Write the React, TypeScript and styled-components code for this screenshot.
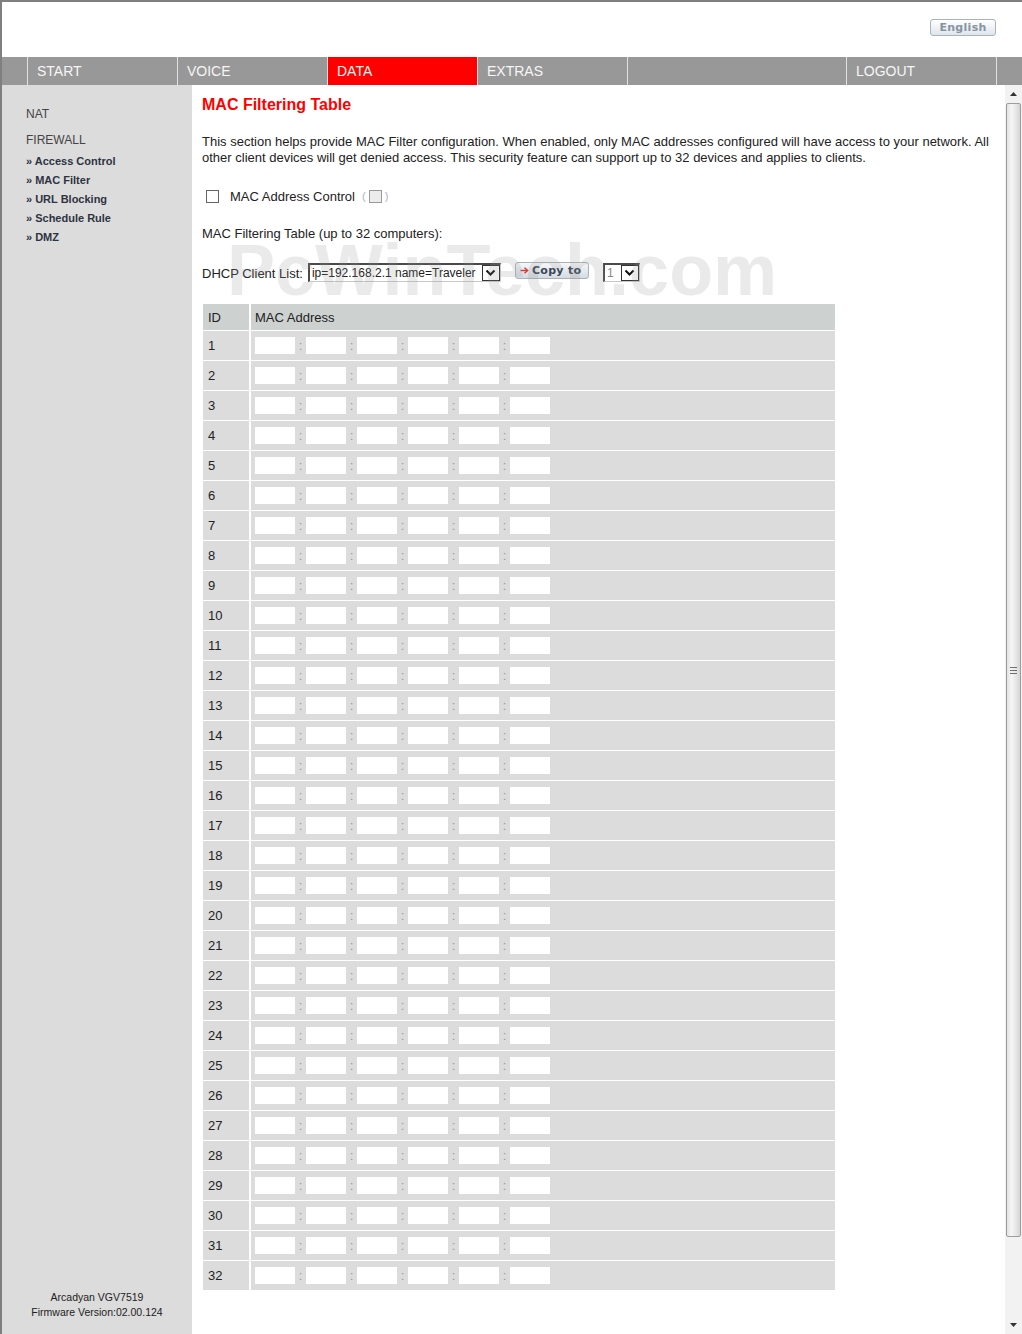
import styled, { createGlobalStyle } from "styled-components";

const GlobalStyle = createGlobalStyle`
  html, body {
    margin:0;
    padding:0;
  }
  body {
    width:1022px;
    height:1334px;
    overflow:hidden;
    background:#fff;
    font-family:"Liberation Sans", Arial, sans-serif;
    color:#222;
  }
  * { box-sizing:border-box; }
`;

const Frame = styled.div`
    width:1022px;
    height:1334px;
    border-top:2px solid #7f7f7f;
    border-left:2px solid #7f7f7f;
    display:flex;
    flex-direction:column;
`;

const Header = styled.header`
    height:55px;
    display:flex;
    justify-content:flex-end;
    align-items:flex-start;
    padding:17px 26px 0 0;
`;

const LangButton = styled.button`
    width:66px;
    height:17px;
    padding:0;
    border:1px solid #a9b3bd;
    border-radius:3px;
    background:linear-gradient(#ffffff, #dfe5eb);
    color:#8794a2;
    font:bold 11px "DejaVu Sans", Verdana, sans-serif;
    letter-spacing:0.3px;
    line-height:15px;
`;

const Nav = styled.nav`
    display:flex;
    height:28px;
    background:#989898;
`;

const NavLead = styled.div`
    width:25px;
`;

const Tab = styled.div<{ $active?: boolean; $w?: number }>`
    width:${(p) => (p.$w ? `${p.$w}px` : "auto")};
    flex:${(p) => (p.$w ? "none" : "1")};
    border-left:1px solid #e2e2e2;
    background:${(p) => (p.$active ? "#ff0000" : "transparent")};
    color:#f6f6f6;
    font-size:14px;
    padding:0 0 1px 9px;
    display:flex;
    align-items:center;
`;

const Body = styled.div`
    flex:1;
    display:flex;
    min-height:0;
`;

const Sidebar = styled.aside`
    width:190px;
    background:#dcdcdc;
    display:flex;
    flex-direction:column;
    justify-content:space-between;
`;

const SideMenu = styled.ul`
    list-style:none;
    margin:0;
    padding:21px 0 0 24px;
`;

const SideHeading = styled.li<{ $gap?: number }>`
    font-size:12px;
    line-height:16px;
    color:#444;
    margin-top:${(p) => p.$gap ?? 0}px;
`;

const SideLink = styled.li<{ $first?: boolean }>`
    font-size:11px;
    font-weight:bold;
    line-height:19px;
    color:#2e3342;
    margin-top:${(p) => (p.$first ? 4 : 0)}px;
`;

const SideFooter = styled.div`
    text-align:center;
    font-size:10.5px;
    line-height:15px;
    color:#222;
    padding-bottom:14px;
`;

const Content = styled.main`
    position:relative;
    flex:1;
    padding:10px 10px 0 10px;
`;

const Title = styled.h1`
    margin:0;
    font-size:16px;
    line-height:20px;
    font-weight:bold;
    color:#ff0000;
`;

const Description = styled.p`
    margin:19px 0 0;
    font-size:13px;
    line-height:16px;
`;

const ControlRow = styled.div`
    margin-top:20px;
    height:20px;
    display:flex;
    align-items:center;
    font-size:13px;
    padding-left:4px;
`;

const Check = styled.span<{ $disabled?: boolean }>`
    display:inline-block;
    width:13px;
    height:13px;
    border:1px solid ${(p) => (p.$disabled ? "#9a9a9a" : "#666")};
    background:${(p) => (p.$disabled ? "#ececec" : "#fff")};
`;

const ControlLabel = styled.span`
    margin-left:11px;
`;

const Paren = styled.span`
    font-size:11px;
    color:#a8b4c4;
    margin:0 3px;
`;

const ParenGroup = styled.span`
    display:inline-flex;
    align-items:center;
    margin-left:4px;
`;

const SubLabel = styled.div`
    margin-top:20px;
    font-size:13px;
    line-height:16px;
`;

const DhcpRow = styled.div`
    margin-top:20px;
    height:20px;
    display:flex;
    align-items:flex-start;
    font-size:13px;
`;

const DhcpLabel = styled.span`
    line-height:24px;
`;

const Select = styled.div<{ $w: number; $gap: number }>`
    width:${(p) => p.$w}px;
    height:19px;
    margin:1px 0 0 ${(p) => p.$gap}px;
    display:flex;
    background:#fff;
    border-top:2px solid #4a4a4a;
    border-left:2px solid #4a4a4a;
    border-right:1px solid #c8c8c8;
    border-bottom:1px solid #c8c8c8;
`;

const SelectValue = styled.span<{ $muted?: boolean }>`
    flex:1;
    overflow:hidden;
    white-space:nowrap;
    font-size:12px;
    line-height:16px;
    padding-left:2px;
    color:${(p) => (p.$muted ? "#888" : "#222")};
`;

const SelectArrow = styled.span`
    width:18px;
    height:100%;
    border:1px solid #333;
    background:#fff;
    display:flex;
    align-items:center;
    justify-content:center;
`;

const CopyButton = styled.button`
    margin-left:14px;
    width:74px;
    height:17px;
    padding:0 0 0 4px;
    border:1px solid #a8b2bc;
    border-radius:3px;
    background:linear-gradient(#f6f8fa, #d4dbe2);
    color:#3a4858;
    font:bold 11px "DejaVu Sans", Verdana, sans-serif;
    letter-spacing:0.3px;
    display:flex;
    align-items:center;
    gap:3px;
`;

const Table = styled.div`
    margin:22px 0 0 1px;
    width:632px;
    display:grid;
    grid-template-columns:46px 584px;
    column-gap:2px;
    row-gap:1px;
    font-size:13px;
`;

const HeadCell = styled.div<{ $pad: number }>`
    height:26px;
    background:#cdd1d0;
    display:flex;
    align-items:center;
    padding-left:${(p) => p.$pad}px;
`;

const Cell = styled.div<{ $pad: number }>`
    height:29px;
    background:#dcdcdc;
    display:flex;
    align-items:center;
    padding-left:${(p) => p.$pad}px;
`;

const OctetInput = styled.input`
    width:40px;
    height:17px;
    padding:0;
    border:none;
    background:#fff;
`;

const Colon = styled.span`
    width:11px;
    text-align:center;
    color:#9a9a9a;
`;

const Watermark = styled.div`
    position:absolute;
    left:35px;
    top:149px;
    font-size:72px;
    line-height:72px;
    font-weight:bold;
    color:rgba(150, 150, 150, 0.2);
    pointer-events:none;
    white-space:nowrap;
`;

const Scrollbar = styled.div`
    width:17px;
    background:#f2f2f2;
    display:flex;
    flex-direction:column;
`;

const ScrollButton = styled.div`
    height:18px;
    display:flex;
    align-items:center;
    justify-content:center;
`;

const ScrollThumb = styled.div`
    height:1134px;
    margin:0 1px;
    border:1px solid #9c9c9c;
    border-radius:2px;
    background:linear-gradient(to right, #e2e2e2, #f6f6f6 35%, #e6e6e6 70%, #d4d4d4);
    display:flex;
    flex-direction:column;
    align-items:center;
    justify-content:center;
    gap:2px;
`;

const Grip = styled.span`
    width:7px;
    height:1px;
    background:#6e6e6e;
`;

const ScrollTrack = styled.div`
    flex:1;
`;

const Chevron = () => (
    <svg width="11" height="8" viewBox="0 0 11 8">
        <polyline points="1.5,1.5 5.5,5.5 9.5,1.5" fill="none" stroke="#111" strokeWidth="2" />
    </svg>
);

const RedArrow = () => (
    <svg width="9" height="7" viewBox="0 0 9 7">
        <line x1="0.5" y1="3.5" x2="7" y2="3.5" stroke="#e53030" strokeWidth="1.4" />
        <polyline points="4.5,0.8 7.6,3.5 4.5,6.2" fill="none" stroke="#e53030" strokeWidth="1.4" />
    </svg>
);

const Triangle = ({ up }: { up?: boolean }) => (
    <svg width="7" height="4" viewBox="0 0 7 4">
        <polygon points={up ? "0,4 3.5,0 7,4" : "0,0 3.5,4 7,0"} fill="#333" />
    </svg>
);

const rows = Array.from({ length: 32 }, (_, i) => i + 1);
const octets = [0, 1, 2, 3, 4, 5];

export default function App() {
    return (
        <>
            <GlobalStyle />
            <Frame>
                <Header>
                    <LangButton type="button">English</LangButton>
                </Header>
                <Nav>
                    <NavLead />
                    <Tab $w={150}>START</Tab>
                    <Tab $w={150}>VOICE</Tab>
                    <Tab $w={150} $active>DATA</Tab>
                    <Tab $w={150}>EXTRAS</Tab>
                    <Tab $w={219} />
                    <Tab $w={150}>LOGOUT</Tab>
                    <Tab />
                </Nav>
                <Body>
                    <Sidebar>
                        <SideMenu>
                            <SideHeading>NAT</SideHeading>
                            <SideHeading $gap={10}>FIREWALL</SideHeading>
                            <SideLink $first>» Access Control</SideLink>
                            <SideLink>» MAC Filter</SideLink>
                            <SideLink>» URL Blocking</SideLink>
                            <SideLink>» Schedule Rule</SideLink>
                            <SideLink>» DMZ</SideLink>
                        </SideMenu>
                        <SideFooter>
                            Arcadyan VGV7519
                            <br />
                            Firmware Version:02.00.124
                        </SideFooter>
                    </Sidebar>
                    <Content>
                        <Title>MAC Filtering Table</Title>
                        <Description>
                            This section helps provide MAC Filter configuration. When enabled, only MAC addresses
                            configured will have access to your network. All other client devices will get denied
                            access. This security feature can support up to 32 devices and applies to clients.
                        </Description>
                        <ControlRow>
                            <Check />
                            <ControlLabel>MAC Address Control</ControlLabel>
                            <ParenGroup>
                                <Paren>(</Paren>
                                <Check $disabled />
                                <Paren>)</Paren>
                            </ParenGroup>
                        </ControlRow>
                        <SubLabel>MAC Filtering Table (up to 32 computers):</SubLabel>
                        <DhcpRow>
                            <DhcpLabel>DHCP Client List:</DhcpLabel>
                            <Select $w={193} $gap={5}>
                                <SelectValue>ip=192.168.2.1 name=Traveler</SelectValue>
                                <SelectArrow>
                                    <Chevron />
                                </SelectArrow>
                            </Select>
                            <CopyButton type="button">
                                <RedArrow />
                                Copy to
                            </CopyButton>
                            <Select $w={37} $gap={14}>
                                <SelectValue $muted>1</SelectValue>
                                <SelectArrow>
                                    <Chevron />
                                </SelectArrow>
                            </Select>
                        </DhcpRow>
                        <Table>
                            <HeadCell $pad={5}>ID</HeadCell>
                            <HeadCell $pad={4}>MAC Address</HeadCell>
                            {rows.map((n) => [
                                <Cell key={`id${n}`} $pad={5}>{n}</Cell>,
                                <Cell key={`mac${n}`} $pad={4}>
                                    {octets.map((k) => [
                                        k > 0 ? <Colon key={`c${k}`}>:</Colon> : null,
                                        <OctetInput key={`o${k}`} type="text" maxLength={2} />,
                                    ])}
                                </Cell>,
                            ])}
                        </Table>
                        <Watermark>PcWinTech.com</Watermark>
                    </Content>
                    <Scrollbar>
                        <ScrollButton>
                            <Triangle up />
                        </ScrollButton>
                        <ScrollThumb>
                            <Grip />
                            <Grip />
                            <Grip />
                        </ScrollThumb>
                        <ScrollTrack />
                        <ScrollButton>
                            <Triangle />
                        </ScrollButton>
                    </Scrollbar>
                </Body>
            </Frame>
        </>
    );
}
